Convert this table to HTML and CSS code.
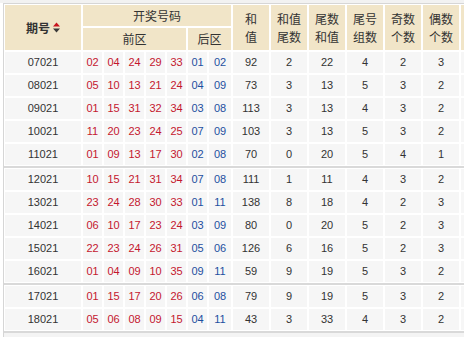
FILE: index.html
```html
<!DOCTYPE html>
<html>
<head>
<meta charset="utf-8">
<link rel="stylesheet" href="styles.css">
</head>
<body>
<div class="frame">
<div class="wrap">
<table class="kj">
<colgroup>
<col class="c-qh">
<col class="c-n"><col class="c-n"><col class="c-n"><col class="c-n"><col class="c-n"><col class="c-n"><col class="c-nl">
<col class="c-s"><col class="c-s"><col class="c-s"><col class="c-s"><col class="c-s"><col class="c-s"><col class="c-s">
</colgroup>
<thead>
<tr>
<th rowspan="2" class="qh"><span class="qh-in"><b>期号</b><svg class="sort" width="7" height="11" viewBox="0 0 7 11"><polygon points="0,4.5 3.5,0.5 7,4.5" fill="#c8141e"/><polygon points="0,6.5 7,6.5 3.5,10.5" fill="#3a3a3a"/></svg></span></th>
<th colspan="7" class="r1">开奖号码</th>
<th rowspan="2">和<br>值</th>
<th rowspan="2">和值<br>尾数</th>
<th rowspan="2">尾数<br>和值</th>
<th rowspan="2">尾号<br>组数</th>
<th rowspan="2">奇数<br>个数</th>
<th rowspan="2">偶数<br>个数</th>
<th rowspan="2"></th>
</tr>
<tr>
<th colspan="5" class="r2">前区</th>
<th colspan="2" class="r2">后区</th>
</tr>
</thead>
<tbody>
<tr><td>07021</td><td class="r">02</td><td class="r">04</td><td class="r">24</td><td class="r">29</td><td class="r">33</td><td class="b">01</td><td class="b">02</td><td>92</td><td>2</td><td>22</td><td>4</td><td>2</td><td>3</td><td></td></tr>
<tr><td>08021</td><td class="r">05</td><td class="r">10</td><td class="r">13</td><td class="r">21</td><td class="r">24</td><td class="b">04</td><td class="b">09</td><td>73</td><td>3</td><td>13</td><td>5</td><td>3</td><td>2</td><td></td></tr>
<tr><td>09021</td><td class="r">01</td><td class="r">15</td><td class="r">31</td><td class="r">32</td><td class="r">34</td><td class="b">03</td><td class="b">08</td><td>113</td><td>3</td><td>13</td><td>4</td><td>3</td><td>2</td><td></td></tr>
<tr><td>10021</td><td class="r">11</td><td class="r">20</td><td class="r">23</td><td class="r">24</td><td class="r">25</td><td class="b">07</td><td class="b">09</td><td>103</td><td>3</td><td>13</td><td>5</td><td>3</td><td>2</td><td></td></tr>
<tr><td>11021</td><td class="r">01</td><td class="r">09</td><td class="r">13</td><td class="r">17</td><td class="r">30</td><td class="b">02</td><td class="b">08</td><td>70</td><td>0</td><td>20</td><td>5</td><td>4</td><td>1</td><td></td></tr>
<tr class="sep"><td colspan="15"></td></tr>
<tr><td>12021</td><td class="r">10</td><td class="r">15</td><td class="r">21</td><td class="r">31</td><td class="r">34</td><td class="b">07</td><td class="b">08</td><td>111</td><td>1</td><td>11</td><td>4</td><td>3</td><td>2</td><td></td></tr>
<tr><td>13021</td><td class="r">23</td><td class="r">24</td><td class="r">28</td><td class="r">30</td><td class="r">33</td><td class="b">01</td><td class="b">11</td><td>138</td><td>8</td><td>18</td><td>4</td><td>2</td><td>3</td><td></td></tr>
<tr><td>14021</td><td class="r">06</td><td class="r">10</td><td class="r">17</td><td class="r">23</td><td class="r">24</td><td class="b">03</td><td class="b">09</td><td>80</td><td>0</td><td>20</td><td>5</td><td>2</td><td>3</td><td></td></tr>
<tr><td>15021</td><td class="r">22</td><td class="r">23</td><td class="r">24</td><td class="r">26</td><td class="r">31</td><td class="b">05</td><td class="b">06</td><td>126</td><td>6</td><td>16</td><td>5</td><td>2</td><td>3</td><td></td></tr>
<tr><td>16021</td><td class="r">01</td><td class="r">04</td><td class="r">09</td><td class="r">10</td><td class="r">35</td><td class="b">09</td><td class="b">11</td><td>59</td><td>9</td><td>19</td><td>5</td><td>3</td><td>2</td><td></td></tr>
<tr class="sep"><td colspan="15"></td></tr>
<tr><td>17021</td><td class="r">01</td><td class="r">15</td><td class="r">17</td><td class="r">20</td><td class="r">26</td><td class="b">06</td><td class="b">08</td><td>79</td><td>9</td><td>19</td><td>5</td><td>3</td><td>2</td><td></td></tr>
<tr><td>18021</td><td class="r">05</td><td class="r">06</td><td class="r">08</td><td class="r">09</td><td class="r">15</td><td class="b">04</td><td class="b">11</td><td>43</td><td>3</td><td>33</td><td>4</td><td>3</td><td>2</td><td></td></tr>
<tr class="sep"><td colspan="15"></td></tr>
<tr class="tail"><td colspan="15"></td></tr>
</tbody>
</table>
</div>
</div>
</body>
</html>
```

FILE: styles.css
```css
html, body {
  margin: 0;
  padding: 0;
  background: #fff;
}

.frame {
  width: 464px;
  height: 337px;
  overflow: hidden;
  box-sizing: border-box;
  padding: 3px 0 0 3px;
  background: linear-gradient(#f2f2f2, #f2f2f2) top left / 100% 3px no-repeat, #fff;
}

.wrap {
  border-left: 1px solid #d6d6d6;
  border-top: 1px solid #d6d6d6;
  width: 520px;
}

.kj {
  border-collapse: separate;
  border-spacing: 0;
  table-layout: fixed;
  width: 494px;
}

.c-qh { width: 78px; }
.c-n { width: 21px; }
.c-nl { width: 24px; }
.c-s { width: 38px; }

.kj th,
.kj td {
  border: 1px solid #fff;
  padding: 0;
  text-align: center;
  vertical-align: middle;
}

.kj th {
  background: #f1e5c8;
  color: #333;
  font-family: "Noto Sans CJK SC", "Liberation Sans", sans-serif;
  font-size: 12px;
  line-height: 18px;
  font-weight: normal;
}

.kj th.r1 { height: 21px; }
.kj th.r2 { height: 22px; }

.qh-in {
  display: inline-flex;
  align-items: center;
  gap: 3px;
}

.qh-in b {
  font-weight: bold;
  color: #333;
}

.sort {
  display: block;
}

.kj td {
  background: #f6f6f6;
  color: #333;
  height: 21px;
  font-family: "Liberation Sans", sans-serif;
  font-size: 11px;
  line-height: 21px;
}

.kj td.r { color: #c4162f; }
.kj td.b { color: #1d4f9f; }

.kj tr.sep td {
  height: 2px;
  border: 0;
  background: #d9d9d9;
  line-height: 0;
  font-size: 0;
}

.kj tr.tail td {
  height: 12px;
  border: 0;
  background: #f4f4f4;
}
```
